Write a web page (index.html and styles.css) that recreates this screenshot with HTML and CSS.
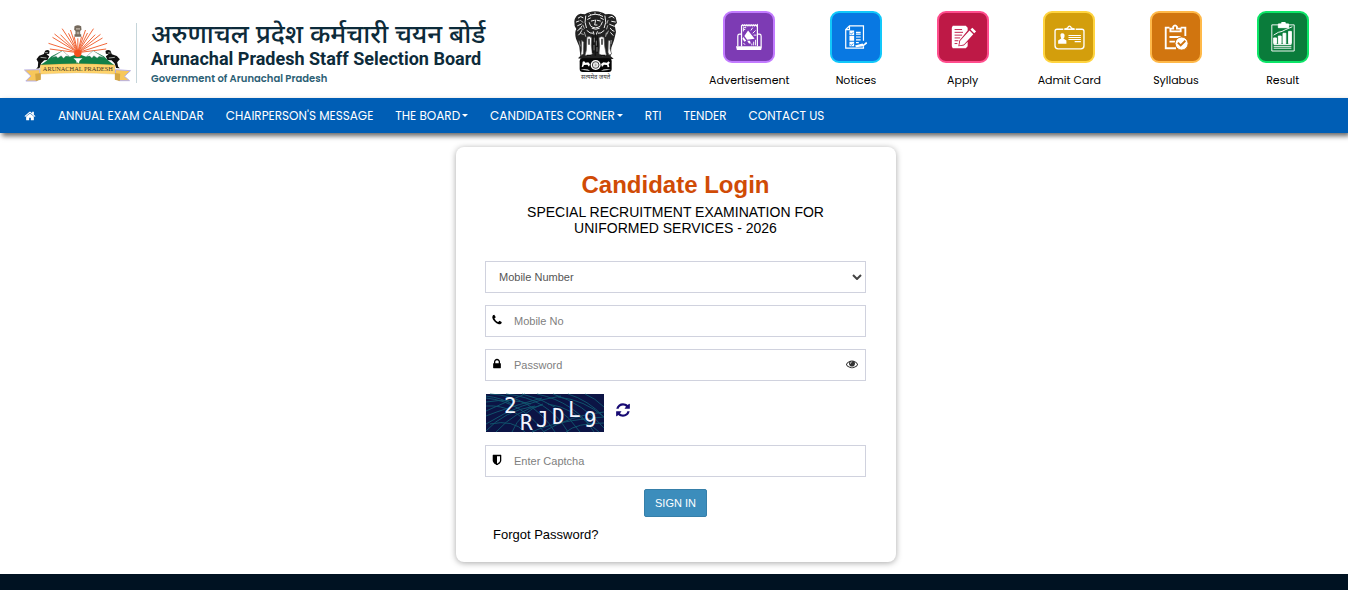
FILE: index.html
```html
<!DOCTYPE html>
<html lang="en">
<head>
    <meta charset="UTF-8">
    <meta name="viewport" content="width=device-width, initial-scale=1.0">
    <title>Candidate Login</title>
    <link rel="stylesheet" href="styles.css">
</head>
<body>
    <header class="site-header">
        <a class="brand" href="#">
            <svg class="state-logo" viewBox="42 42 320 171" role="img" aria-label="Arunachal Pradesh">
                <g stroke="#f2683a" stroke-width="3">
                    <path d="M203 125 115 97M203 125 119 114M203 125 127 79M203 125 133 69M203 125 151 71M203 125 156 53M203 125 175 67M203 125 181 57M203 125 192 77M203 125 203 82M203 125 214 77M203 125 226 57M203 125 232 66M203 125 250 53M203 125 255 71M203 125 271 70M203 125 277 81M203 125 291 97M203 125 288 114"/>
                </g>
                <g fill="#74695c">
                    <path d="M193 46q10-7 20 0l1 10-4 4v10h3v7h-20v-7h3V60l-4-4z"/>
                    <path fill="#e8ddd0" d="M199 51h3v5h-3zM205 51h3v5h-3zM200 62h2v8h-2zM205 62h2v8h-2z"/>
                </g>
                <path fill="#128048" d="M90 163q20-12 34-27l32-17 23 18 24-9 25 9 21-18 32 17q14 15 32 27z"/>
                <circle cx="203" cy="127" r="11" fill="#f4511e"/>
                <path fill="#fff" stroke="#7d8d92" stroke-width="1" d="M126 139l31-20 20 17-10-1-7 7-7-8-10 7-5-5zM229 136l20-17 31 20-13-3-6 5-10-7-6 7-6-6z"/>
                <path fill="#fff" d="M190 142h27l-9 7-2 9-3-4-3 3-2-8z"/>
                <g fill="#111">
                    <path d="M105 119q8-5 13 1l-1 8-8 2 8 6-5 11-10 1-9 9-5 15-10 1 5-5 1-14-5-9 8-11 14-5z"/>
                    <path d="M301 119q-8-5-15 1l1 8 8 2-8 6 5 11 12 1 9 9 5 14 11 1-5-5-3-13 8-9-9-10-15-5z"/>
                </g>
                <path d="M105 125h8M91 139l18 2M293 126h8M296 141l18-2" stroke="#e8eee9" stroke-width="2"/>
                <path fill="#f7c75b" stroke="#b7afe3" stroke-width="3" d="M43 177l46-1v25l-9 9H47l15-15zM361 179l-45-3v25l10 8h32l-15-13z"/>
                <path fill="#d6a640" d="M75 188l17-2v20l-15 4zM330 188l-16-2v20l15 4z"/>
                <path fill="#ffd36a" stroke="#d9a83e" stroke-width="1" d="M91 162q112-8 223 0v27q-111-8-223 0z"/>
                <text class="ribbon-text" x="203" y="181" text-anchor="middle">ARUNACHAL PRADESH</text>
            </svg>
            <span class="divider"></span>
            <span class="brand-text">
                <span class="brand-hindi" lang="hi">अरुणाचल प्रदेश कर्मचारी चयन बोर्ड</span>
                <span class="brand-name">Arunachal Pradesh Staff Selection Board</span>
                <span class="brand-gov">Government of Arunachal Pradesh</span>
            </span>
        </a>

        <svg class="emblem" viewBox="38 16 138 210" role="img" aria-label="State Emblem of India">
            <path fill="#222" d="M42 47q2-18 18-23l14 2q11-8 31-9 20 1 30 9 22-5 31 9l4 17-7 7 4 20-6 25-8 22-2 26 9 7-8 2H70l-17-3 7-7-3-28-10-24q-5-20 1-29l-5-9z"/>
            <g fill="none" stroke="#eee" stroke-width="3" stroke-linecap="round">
                <path d="M54 37l7-4 7 3M48 49l8-3M52 60l11-5M52 75q10-6 13-14M55 88q6-5 9-13M146 35l9-3 6 5M154 47l11 2M148 56l14 6M150 68q4 8 11 9M151 81l7 8"/>
                <path d="M84 32q20-13 43 0M82 41l8-4M121 37l8 4M93 46l9-2M111 44l9 2M106 43l-3 15 7 0M91 61q14 12 29 0M87 51l3 8M126 49l-4 9M95 68q12 6 22 0"/>
                <path d="M76 31q-5 20 2 35M134 31q6 20-2 35M80 75q10 10 17 8M131 75q-10 10-17 8M99 78l2 8M111 78l-3 8"/>
                <path stroke-width="2" d="M60 44l8 6M58 68l10 3M62 84l7 2M68 58l4 10M143 44l-3 9M142 60l-3 10M144 76l-4 9M88 24l4 4M104 20v6M120 24l-4 4M72 80l4 12M138 82l-2 10"/>
            </g>
            <g fill="#fff" stroke="#555" stroke-width="2">
                <path d="M80 94q8-4 14 3l-1 22 3 26-9 6-13-2 4-15z"/>
                <path d="M116 96q7-5 15-1l2 27 5 26-12 3-10-7 2-23z"/>
                <path d="M64 104l6 6-1 35-6 4-1-6 2-12zM144 105l6-1-1 25 5 16-8 3-3-8z"/>
            </g>
            <path stroke="#111" stroke-width="4" fill="none" d="M105 85v65M98 89v53M111 90v52M86 99v18M125 99v18M79 149h13M120 149h14"/>
            <path stroke="#aaa" stroke-width="2" fill="none" d="M102 96v14M108 105v15M101 118v16M110 124v14M56 105l4 17M154 103l-2 12"/>
            <rect x="58" y="158" width="96" height="41" rx="9" fill="#050505"/>
            <circle cx="106" cy="178" r="15" fill="#fff"/>
            <circle cx="106" cy="178" r="10" fill="none" stroke="#444" stroke-width="3"/>
            <path d="M96 178h20M106 168v20M99 171l14 14M113 171l-14 14" stroke="#777" stroke-width="1"/>
            <path fill="#fff" d="M67 168q5-3 8 3l9-1 5 6-3 7-5-6-10 1-3 6-4-1 2-7zM122 175l7-5 11 1 4-4 5 4-4 5 2 8-5 1-2-7-9-1-6 7zM60 192q20-3 30 3-14-1-30-3zM152 192q-20-3-30 3 14-1 30-3z"/>
            <text class="motto" lang="hi" x="106" y="219" text-anchor="middle">सत्यमेव जयते</text>
        </svg>

        <nav class="quick-links" aria-label="Quick links">
            <a href="#">
                <span class="tile purple">
                    <svg viewBox="0 0 30 30" fill="none" stroke="#fff" stroke-width="1.3">
                        <path d="M3 25V14q0-2 2-2h2M24 12h2q2 0 2 2v11M7 25V3l1-1 1 1 1-1 1 1 1-1 1 1 1-1 1 1 1-1 1 1 1-1 1 1 1-1 1 1 1-1 1 1 1-1v23"/>
                        <path fill="#fff" stroke="none" d="M1 25h28l-1 4H2z"/>
                        <path fill="#fff" stroke="none" d="M14 8l7 9-8 1-3-4zM9 15l3 4-2 1-2-3zM13 19h3l1 3h-2z"/>
                        <path stroke-width="1" d="M9 9V5h3M9 7h2M17 8l2-3M19 11l3-3M20 13h3M18 24v-2M20 24v-4M22 24v-6M9 22l2 1"/>
                    </svg>
                </span>
                Advertisement
            </a>
            <a href="#">
                <span class="tile blue">
                    <svg viewBox="0 0 30 30" fill="none" stroke="#fff" stroke-width="1.3">
                        <path d="M23 19V3H8L4 7v20h19v-2M8 3v4H4"/>
                        <path fill="#fff" stroke="none" d="M8 8h5v5H8zM8 14h5v5H8zM8 20h5v5H8z"/>
                        <path d="M15 10h5M15 12h5M15 15h5M15 18h5M15 21h3"/>
                        <path stroke="#0878e2" stroke-width="1" d="M9 11l1 1 2-2M9 23l1 1 2-2"/>
                        <path fill="#fff" stroke="none" d="M14 24l8-2 1 1 3-3 1 2-4 3-8 1z"/>
                    </svg>
                </span>
                Notices
            </a>
            <a href="#">
                <span class="tile red">
                    <svg viewBox="0 0 30 30">
                        <path fill="#fff" d="M4 3h14l2 2v3l-9 11-1 6 6-1 4-4v5l-2 2H4l-1-2V5z"/>
                        <path stroke="#be1946" stroke-width="1" d="M6 7h8M6 10h9M6 13h8M6 16h6M6 19h4M6 22h3"/>
                        <path fill="#fff" d="M12 19 22 8l4 4-10 11-5 1zM23 7l2-2 4 4-2 2z"/>
                    </svg>
                </span>
                Apply
            </a>
            <a href="#">
                <span class="tile gold">
                    <svg class="wide-icon" viewBox="0 0 30 26" fill="none" stroke="#fff" stroke-width="1.3">
                        <path d="M9 5H3Q1 5 1 7v14q0 3 3 3h22q3 0 3-3V7q0-2-2-2h-6M10 5l3-1q2-4 4 0l3 1z"/>
                        <path stroke-width="1" d="M14 11h12M14 13h12M14 15h12M20 17h6"/>
                        <path fill="#fff" stroke="none" d="M8 9q3 0 2 4l-1 1 3 2v3H4v-3l3-2q-2-5 1-5z"/>
                    </svg>
                </span>
                Admit Card
            </a>
            <a href="#">
                <span class="tile orange">
                    <svg viewBox="0 0 30 30" fill="none" stroke="#fff" stroke-width="2">
                        <path d="M8 5H4v22h11M20 5h5v9M9 6h3V4q2-3 4 0v2h4v3H9z"/>
                        <path d="M8 15h12M8 20h6"/>
                        <circle cx="21" cy="22" r="7" fill="#fff" stroke="#d1750f" stroke-width="1"/>
                        <path stroke="#d1750f" d="M17 21l3 3 5-5"/>
                    </svg>
                </span>
                Syllabus
            </a>
            <a href="#">
                <span class="tile green">
                    <svg viewBox="0 0 30 32" fill="none" stroke="#fff">
                        <path d="M10 3H3v28h24V3h-7M5 24h19M5 26h19M5 28h19" />
                        <path fill="#fff" d="M10 2h3l1-2h3l1 2h3v4H10zM5 17h3v6H5zM10 15h3v8h-3zM15 12h3v11h-3zM21 10h3v13h-3z"/>
                        <path d="M5 14l5-3 4-1 4-2 7-3"/>
                    </svg>
                </span>
                Result
            </a>
        </nav>
    </header>

    <nav class="main-nav" aria-label="Main">
        <ul>
            <li>
                <a href="#" aria-label="Home">
                    <svg class="home-icon" viewBox="0 0 1792 1792"><path d="M1472 992v480q0 26-19 45t-45 19h-384v-384h-256v384h-384q-26 0-45-19t-19-45v-480q0-1 .5-3t.5-3l575-474 575 474q1 2 1 6zm223-69l-62 74q-8 9-21 11h-3q-13 0-21-7l-692-577-692 577q-12 8-24 7-13-2-21-11l-62-74q-8-10-7-23.5t11-21.5l719-599q32-26 76-26t76 26l244 204v-195q0-14 9-23t23-9h192q14 0 23 9t9 23v408l219 182q10 8 11 21.5t-7 23.5z"/></svg>
                </a>
            </li>
            <li><a href="#">ANNUAL EXAM CALENDAR</a></li>
            <li><a href="#">CHAIRPERSON'S MESSAGE</a></li>
            <li><a href="#">THE BOARD<span class="caret"></span></a></li>
            <li><a href="#">CANDIDATES CORNER<span class="caret"></span></a></li>
            <li><a href="#">RTI</a></li>
            <li><a href="#">TENDER</a></li>
            <li><a href="#">CONTACT US</a></li>
        </ul>
    </nav>

    <main class="login-area">
        <form class="login-card">
            <h1>Candidate Login</h1>
            <p class="exam-name">SPECIAL RECRUITMENT EXAMINATION FOR UNIFORMED SERVICES - 2026</p>

            <div class="field select-field">
                <select aria-label="Login with">
                    <option>Mobile Number</option>
                    <option>Email</option>
                </select>
                <svg class="chevron" viewBox="0 0 10 6"><path d="M1 1l4 4 4-4" fill="none" stroke="#444" stroke-width="2"/></svg>
            </div>

            <div class="field">
                <svg class="field-icon" viewBox="0 0 1792 1792"><path d="M1600 1240q0 27-10 70.5t-21 68.5q-21 50-122 106-94 51-186 51-27 0-52.5-3.5t-57.5-12.5-47.5-14.5-55.5-20.5-49-18q-98-35-175-83-128-79-264.5-215.5t-215.5-264.5q-48-77-83-175-3-9-18-49t-20.5-55.5-14.5-47.5-12.5-57.5-3.5-52.5q0-92 51-186 56-101 106-122 25-11 68.5-21t70.5-10q14 0 21 3 18 6 53 76 11 19 30 54t35 63.5 31 53.5q3 4 17.5 25t21.5 35.5 7 28.5q0 20-28.5 50t-62 55-62 53-28.5 46q0 9 5 22.5t8.5 20.5 14 24 11.5 19q76 137 174 235t235 174q2 1 19 11.5t24 14 20.5 8.5 22.5 5q18 0 46-28.5t53-62 55-62 50-28.5q14 0 28.5 7t35.5 21.5 25 17.5q25 15 53.5 31t63.5 35 54 30q70 35 76 53 3 7 3 21z"/></svg>
                <input type="text" placeholder="Mobile No" aria-label="Mobile No">
            </div>

            <div class="field">
                <svg class="field-icon" viewBox="0 0 1792 1792"><path d="M640 768h512v-192q0-106-75-181t-181-75-181 75-75 181v192zm832 96v576q0 40-28 68t-68 28h-960q-40 0-68-28t-28-68v-576q0-40 28-68t68-28h32v-192q0-184 132-316t316-132 316 132 132 316v192h32q40 0 68 28t28 68z"/></svg>
                <input type="password" placeholder="Password" aria-label="Password">
                <button class="icon-button" type="button" aria-label="Show password">
                    <svg class="eye-icon" viewBox="0 0 1792 1792"><path d="M1664 960q-152-236-381-353 61 104 61 225 0 185-131.5 316.5t-316.5 131.5-316.5-131.5-131.5-316.5q0-121 61-225-229 117-381 353 133 205 333.5 326.5t434.5 121.5 434.5-121.5 333.5-326.5zm-720-384q0-20-14-34t-34-14q-125 0-214.5 89.5t-89.5 214.5q0 20 14 34t34 14 34-14 14-34q0-86 61-147t147-61q20 0 34-14t14-34zm848 384q0 34-20 69-140 230-376.5 368.5t-499.5 138.5-499.5-139-376.5-368q-20-35-20-69t20-69q140-229 376.5-368t499.5-139 499.5 139 376.5 368q20 35 20 69z"/></svg>
                </button>
            </div>

            <div class="captcha-row">
                <svg class="captcha" viewBox="0 0 118 38" role="img" aria-label="Captcha">
                    <rect width="118" height="38" fill="#0c1445"/>
                    <g fill="none" stroke="#12687a" stroke-width="1" opacity=".75">
                        <path d="M0 4q36 4 58 34M0 12q30-2 48 26M0 22q20-8 56-18M0 30q35-22 75-28M0 37q18-20 49-25M4 0q42 2 65 38M20 0q42 4 62 38M36 0q38 8 58 38M51 0q38 8 57 38M67 0q31 10 51 34M82 0q20 6 36 23M99 0q10 4 19 13"/>
                        <path d="M0 17q20-9 39-17M10 38q20-22 46-27M26 38q8-20 31-28M46 38q22-11 72-15M57 38q28-17 61-20M72 3q27 3 46 20M62 10q24 3 51 28M0 8q25-4 45 2M4 30q23-5 35 8M80 38q10-9 38-9M0 2q16 2 26 8"/>
                    </g>
                    <g class="captcha-text">
                        <text x="18" y="19">2</text>
                        <text x="34" y="36">R</text>
                        <text x="50" y="33">J</text>
                        <text x="66" y="30">D</text>
                        <text x="82" y="23">L</text>
                        <text x="98" y="33">9</text>
                    </g>
                </svg>
                <button class="icon-button" type="button" aria-label="Refresh captcha">
                    <svg class="refresh-icon" viewBox="0 0 1792 1792"><path d="M1639 1056q0 5-1 7-64 268-268 434.5t-478 166.5q-146 0-282.5-55t-243.5-157l-129 129q-19 19-45 19t-45-19-19-45v-448q0-26 19-45t45-19h448q26 0 45 19t19 45-19 45l-137 137q71 66 161 102t187 36q134 0 250-65t186-179q11-17 53-117 8-23 30-23h192q13 0 22.5 9.5t9.5 22.5zm25-800v448q0 26-19 45t-45 19h-448q-26 0-45-19t-19-45 19-45l138-138q-148-137-349-137-134 0-250 65t-186 179q-11 17-53 117-8 23-30 23h-199q-13 0-22.5-9.5t-9.5-22.5v-7q65-268 270-434.5t480-166.5q146 0 284 55.5t245 156.5l130-129q19-19 45-19t45 19 19 45z"/></svg>
                </button>
            </div>

            <div class="field">
                <svg class="field-icon" viewBox="0 0 1792 1792"><path d="M1344 960v-640h-448v1137q119-63 213-137 235-184 235-360zm192-768v768q0 86-33.5 170.5t-83 150-118 127.5-126.5 103-121 77.5-89.5 49.5-42.5 20q-12 6-26 6t-26-6q-16-7-42.5-20t-89.5-49.5-121-77.5-126.5-103-118-127.5-83-150-33.5-170.5v-768q0-26 19-45t45-19h1152q26 0 45 19t19 45z"/></svg>
                <input type="text" placeholder="Enter Captcha" aria-label="Enter Captcha">
            </div>

            <button class="sign-in" type="submit">SIGN IN</button>
            <a class="forgot" href="#">Forgot Password?</a>
        </form>
    </main>

    <footer class="site-footer"></footer>
</body>
</html>
```
FILE: styles.css
```css
* {
    box-sizing: border-box;
}
body {
    margin: 0;
    min-height: 100vh;
    display: flex;
    flex-direction: column;
    background-color: #fff;
    font-family: "Liberation Sans", Arial, sans-serif;
    color: #000;
}
a {
    color: inherit;
    text-decoration: none;
}
svg {
    display: block;
}

/* header */
.site-header {
    display: grid;
    grid-template-columns: 36% 1fr 640px;
    align-items: center;
    height: 98px;
    padding: 0 12px 0 24px;
}
.brand {
    display: flex;
    align-items: center;
    padding-top: 8px;
    white-space: nowrap;
}
.state-logo {
    width: 107px;
    height: 57px;
    flex-shrink: 0;
}
.ribbon-text {
    font: 19px "Liberation Serif", serif;
    fill: #3d3520;
}
.divider {
    width: 1px;
    height: 60px;
    margin: 0 14px 0 5px;
    background-color: #c5d5da;
}
.brand-text {
    display: flex;
    flex-direction: column;
    color: #0d2b3a;
}
.brand-hindi {
    font: 500 26px/32px "Noto Sans", "Noto Sans Devanagari", sans-serif;
}
.brand-name {
    font: bold 18px/20px Roboto, sans-serif;
}
.brand-gov {
    font: 600 10px/20px Poppins, Inter, sans-serif;
    color: #2b6074;
}
.emblem {
    width: 46px;
    height: 70px;
    margin-bottom: 6px;
    justify-self: center;
}
.motto {
    font: 18px "Noto Sans", "Noto Sans Devanagari", sans-serif;
    fill: #333;
}
.quick-links {
    display: grid;
    grid-template-columns: repeat(6, 1fr);
    padding-top: 2px;
}
.quick-links a {
    display: flex;
    flex-direction: column;
    align-items: center;
    gap: 8px;
    font: 11px/18px Poppins, Inter, sans-serif;
}
.tile {
    display: flex;
    align-items: center;
    justify-content: center;
    width: 52px;
    height: 52px;
    border: 2px solid;
    border-radius: 9px;
}
.tile svg {
    width: 28px;
    height: 30px;
}
.tile .wide-icon {
    width: 31px;
    height: 27px;
}
.purple {
    background-color: #7d3bb4;
    border-color: #c27bff;
}
.blue {
    background-color: #0878e2;
    border-color: #12c8fa;
}
.red {
    background-color: #be1946;
    border-color: #ff4d8d;
}
.gold {
    background-color: #d39e0c;
    border-color: #ffd43f;
}
.orange {
    background-color: #d1750f;
    border-color: #ffb949;
}
.green {
    background-color: #0a7c3b;
    border-color: #0ce567;
}

/* navigation */
.main-nav {
    background-color: #005eb5;
    box-shadow: 2px 3px 5px rgba(0, 0, 0, 0.6);
}
.main-nav ul {
    display: flex;
    margin: 0;
    padding: 0 13px;
    list-style: none;
}
.main-nav a {
    display: flex;
    align-items: center;
    height: 35px;
    padding: 0 11px;
    color: #fff;
    font: 12px/18px Poppins, Inter, sans-serif;
}
.home-icon {
    width: 12px;
    height: 12px;
    fill: #fff;
}
.caret {
    margin-left: 2px;
    border-top: 3px solid #fff;
    border-left: 3px solid transparent;
    border-right: 3px solid transparent;
}

/* login form */
.login-area {
    flex: 1;
    display: flex;
    justify-content: center;
    align-items: flex-start;
    padding: 14px 0 12px 4px;
}
.login-card {
    display: flex;
    flex-direction: column;
    gap: 12px;
    width: 100%;
    max-width: 440px;
    padding: 24px 30px 18px 29px;
    border-radius: 8px;
    background-color: #fff;
    box-shadow: 0 1px 6px rgba(0, 0, 0, 0.35);
}
.login-card h1 {
    margin: 0 0 -7px;
    color: #d04b06;
    font-size: 24px;
    line-height: 28px;
    text-align: center;
}
.exam-name {
    margin: 0 0 13px;
    padding: 0 40px;
    font-size: 14px;
    line-height: 16px;
    text-align: center;
}
.field {
    display: flex;
    align-items: center;
    height: 32px;
    border: 1px solid #d0d2de;
}
.field input,
.field select {
    flex: 1;
    min-width: 0;
    height: 30px;
    border: 0;
    background: none;
    outline: none;
    font: 11px "Liberation Sans", Arial, sans-serif;
    color: #555;
}
.field input {
    padding: 0 11px;
}
.field select {
    appearance: none;
    padding: 0 13px;
}
.select-field {
    display: grid;
}
.select-field > * {
    grid-area: 1 / 1;
}
.chevron {
    width: 10px;
    height: 6px;
    margin-right: 3px;
    justify-self: end;
    pointer-events: none;
}
.field input::placeholder {
    color: #808080;
}
.field-icon {
    width: 12px;
    height: 12px;
    margin: 0 0 2px 5px;
}
.icon-button {
    padding: 0;
    border: 0;
    background: none;
    cursor: pointer;
}
.eye-icon {
    width: 12px;
    height: 12px;
    margin: 0 7px 2px 0;
    fill: #333;
}
.captcha-row {
    display: flex;
    align-items: center;
    gap: 11px;
    height: 40px;
    padding-left: 1px;
}
.captcha {
    width: 118px;
    height: 38px;
    overflow: visible;
}
.captcha-text {
    font: 21px "DejaVu Sans Mono", monospace;
    fill: #f1f4ff;
}
.refresh-icon {
    width: 16px;
    height: 16px;
    margin-bottom: 6px;
    fill: #170a73;
}
.sign-in {
    align-self: center;
    height: 28px;
    padding: 0 10px;
    border: 1px solid #367fa9;
    border-radius: 2px;
    background-color: #3c8dbc;
    color: #fff;
    font: 11px "Liberation Sans", Arial, sans-serif;
    cursor: pointer;
}
.sign-in:hover {
    background-color: #367fa9;
}
.forgot {
    align-self: flex-start;
    margin-top: -3px;
    padding-left: 8px;
    font-size: 13px;
    line-height: 18px;
}

.site-footer {
    height: 16px;
    background-color: #001222;
}
```
